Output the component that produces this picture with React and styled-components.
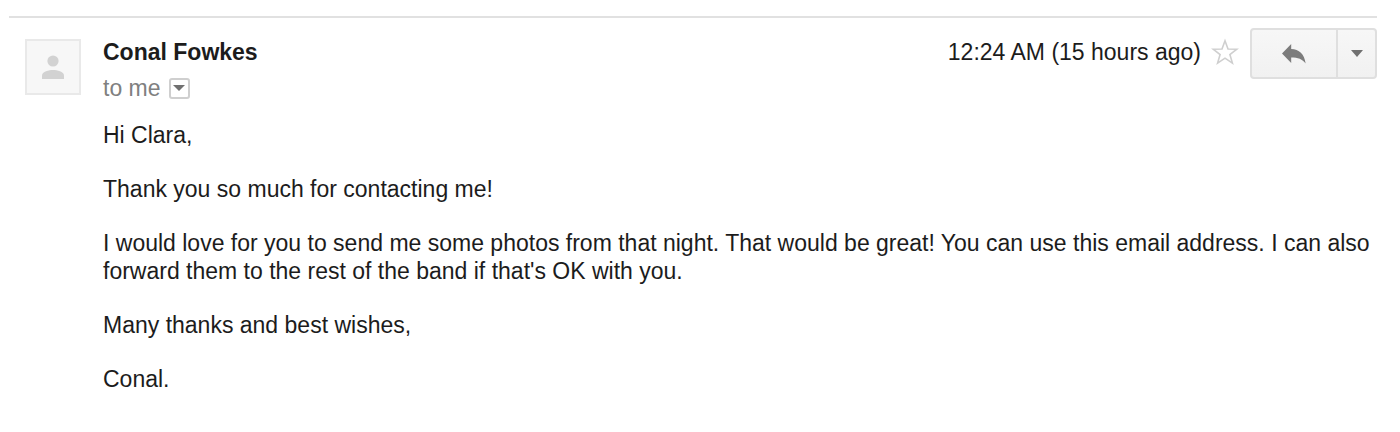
import styled, { createGlobalStyle } from "styled-components";

const paragraphs = [
  "Hi Clara,",
  "Thank you so much for contacting me!",
  "I would love for you to send me some photos from that night. That would be great! You can use this email address. I can also forward them to the rest of the band if that's OK with you.",
  "Many thanks and best wishes,",
  "Conal.",
];

const App = () => {
  return (
    <>
      <GlobalStyle />
      <Message>
        <Avatar>
          <svg width="22" height="24" viewBox="0 0 22 24" fill="#d2d2d2" aria-hidden="true">
            <circle cx="11" cy="6" r="5.6" />
            <path d="M0 24v-3.6C0 16.600 7 15 11 15s11 1.600 11 5.400V24z" />
          </svg>
        </Avatar>
        <Content>
          <Header>
            <Sender>
              <Name>Conal Fowkes</Name>
              <Recipient>
                to me
                <DetailsButton type="button" aria-label="Show details">
                  <Caret width="12" height="6" />
                </DetailsButton>
              </Recipient>
            </Sender>
            <Actions>
              <Status>
                <time>12:24 AM (15 hours ago)</time>
                <StarButton type="button" aria-label="Star">
                  <svg width="28" height="28" viewBox="0 0 28 28" fill="#fff" stroke="#cfcfcf" strokeWidth="1.6">
                    <path d="M14 2.800l3 8.200 8.900.2-7 5.300 2.500 8.600-7.400-5-7.400 5 2.500-8.600-7-5.300 8.900-.2z" />
                  </svg>
                </StarButton>
              </Status>
              <ButtonGroup>
                <ReplyButton type="button" aria-label="Reply">
                  <svg width="24" height="20" viewBox="0 0 24 20" fill="#7c7c7c">
                    <path d="M0 9.500L9.200 0v5C17 5.400 22.500 10 23.600 19.600 20.500 15.200 16 13.600 9.200 13.600v5.400z" />
                  </svg>
                </ReplyButton>
                <MoreButton type="button" aria-label="More">
                  <Caret width="12" height="7" />
                </MoreButton>
              </ButtonGroup>
            </Actions>
          </Header>
          <Body>
            {paragraphs.map((text) => (
              <Paragraph key={text}>{text}</Paragraph>
            ))}
          </Body>
        </Content>
      </Message>
    </>
  );
};

export default App;

const Caret = ({ width, height }) => (
  <svg width={width} height={height} viewBox="0 0 12 6" preserveAspectRatio="none" fill="#707070" aria-hidden="true">
    <path d="M0 0h12L6 6z" />
  </svg>
);

const GlobalStyle = createGlobalStyle`
  * {
    box-sizing: border-box;
  }

  body {
    margin: 0;
    background: #fff;
    color: #1c1c1c;
    font-family: "Liberation Sans", Arial, sans-serif;
    font-size: 23px;
    line-height: 28px;
  }

  button {
    display: flex;
    align-items: center;
    justify-content: center;
    padding: 0;
    cursor: pointer;
  }
`;

const Message = styled.article`
  display: flex;
  align-items: flex-start;
  gap: 22px;
  margin: 16px 23px 0 9px;
  padding: 10px 0 0 16px;
  border-top: 2px solid #e1e1e1;
`;

const Avatar = styled.div`
  display: flex;
  flex-shrink: 0;
  align-items: center;
  justify-content: center;
  width: 56px;
  height: 56px;
  margin-top: 11px;
  border: 2px solid #e9e9e9;
  background: #f7f7f7;
`;

const Content = styled.div`
  flex: 1;
  min-width: 0;
`;

const Header = styled.header`
  display: flex;
  align-items: flex-start;
  justify-content: space-between;
`;

const Sender = styled.div`
  padding-top: 10px;
`;

const Name = styled.h2`
  margin: 0;
  font-size: 23px;
  line-height: 28px;
`;

const Recipient = styled.div`
  display: flex;
  align-items: center;
  gap: 8px;
  margin-top: 8px;
  color: #808080;
`;

const DetailsButton = styled.button`
  width: 21px;
  height: 21px;
  border: 2px solid #cfcfcf;
  border-radius: 3px;
  background: #fff;
`;

const Actions = styled.div`
  display: flex;
  align-items: flex-start;
  gap: 11px;
`;

const Status = styled.div`
  display: flex;
  align-items: center;
  gap: 10px;
  padding-top: 10px;
`;

const StarButton = styled.button`
  border: 0;
  background: none;
`;

const ButtonGroup = styled.div`
  display: flex;
  height: 51px;
  border: 2px solid #dfdfdf;
  border-radius: 4px;
  background: linear-gradient(#f7f7f7, #f1f1f1);
`;

const ReplyButton = styled.button`
  width: 84px;
  border: 0;
  background: none;
`;

const MoreButton = styled.button`
  width: 39px;
  border: 0;
  border-left: 2px solid #dfdfdf;
  background: none;
`;

const Body = styled.div`
  margin-top: 19px;
`;

const Paragraph = styled.p`
  margin: 0 0 26px;
`;
